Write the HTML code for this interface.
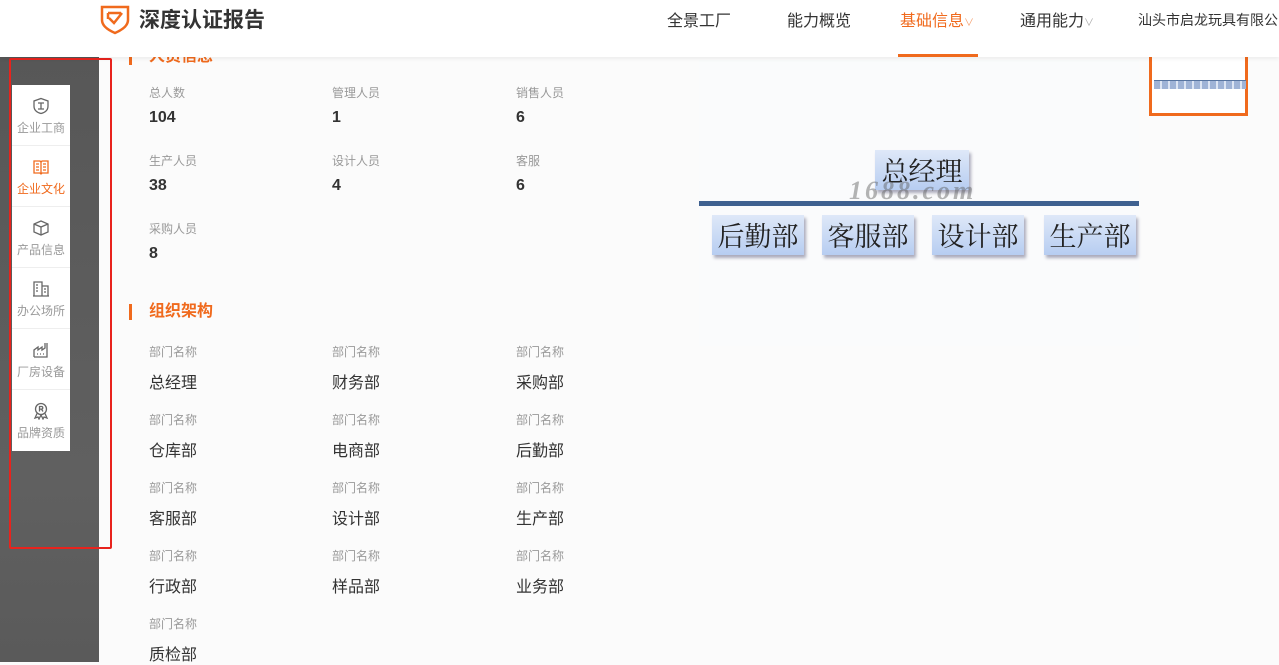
<!DOCTYPE html>
<html><head><meta charset="utf-8"><style>
*{margin:0;padding:0;box-sizing:border-box}
body{width:1279px;height:662px;overflow:hidden;background:#fbfbfb;font-family:"Liberation Sans","Noto Sans CJK SC",sans-serif;position:relative}
.side{position:absolute;left:0;top:57px;width:99px;height:605px;background:linear-gradient(180deg,#575757,#606060 70%,#5a5a5a)}
.redbox{position:absolute;left:9px;top:58px;width:103px;height:491px;border:2px solid #e8231d;border-radius:2px}
.menu{position:absolute;left:12px;top:85px;width:58px;background:#fff}
.mi{height:61px;border-bottom:1px solid #eee;text-align:center;font-size:12px;color:#999;padding-top:12px}
.mi svg{display:block;margin:0 auto 4px}
.mi.on{color:#f06a1d}
.hdr{position:absolute;left:0;top:0;width:1279px;height:57px;background:#fff;box-shadow:0 2px 4px rgba(0,0,0,.06);z-index:5}
.logo{position:absolute;left:99px;top:3px}
.brand{position:absolute;left:139px;top:4px;font-size:21px;font-weight:bold;color:#333}
.nav{position:absolute;top:7px;font-size:16px;color:#333}
.ul{position:absolute;left:898px;top:54px;width:80px;height:3px;background:#f06a1d}
.sec{position:absolute;left:129px;font-size:16px;font-weight:bold;color:#f06a1d;border-left:3px solid #f06a1d;padding-left:17px;line-height:16px}
.l{position:absolute;font-size:12px;color:#999}
.v{position:absolute;font-size:16px;color:#333}
.b{font-weight:bold}
.img{position:absolute;left:699px;top:60px;width:440px;height:286px;background:#fafbfc}
.box{position:absolute;background:linear-gradient(#dfe8f8,#b7cdf1);box-shadow:2px 3px 3px #aab;font-family:"Noto Serif CJK SC",serif;font-size:27px;color:#222;text-align:center;line-height:40px;white-space:nowrap}
</style></head><body>
<div class="side"></div>
<div class="menu">
<div class="mi"><svg width="18" height="18" viewBox="0 0 18 18" fill="none" stroke="#666" stroke-width="1.3"><path d="M9 1.5L16 4v5c0 4-3 6.5-7 7.5C5 15.5 2 13 2 9V4z"/><path d="M6 6h6M9 6v6M6 12h6"/></svg>企业工商</div>
<div class="mi on"><svg width="18" height="18" viewBox="0 0 18 18" fill="none" stroke="#f06a1d" stroke-width="1.3"><path d="M2 3h6l1 1 1-1h6v12h-6l-1 1-1-1H2z"/><path d="M9 4v11M4 6h3M4 9h3M4 12h3M11 6h3M11 9h3M11 12h3"/></svg>企业文化</div>
<div class="mi"><svg width="18" height="18" viewBox="0 0 18 18" fill="none" stroke="#666" stroke-width="1.3"><path d="M9 2l7 3v8l-7 3-7-3V5z"/><path d="M2 5l7 3 7-3M9 8v8"/></svg>产品信息</div>
<div class="mi"><svg width="18" height="18" viewBox="0 0 18 18" fill="none" stroke="#666" stroke-width="1.3"><path d="M2 16V2h8v14M10 6h6v10M1 16h16M4 5h2M4 8h2M4 11h2M12 9h2M12 12h2"/></svg>办公场所</div>
<div class="mi"><svg width="18" height="18" viewBox="0 0 18 18" fill="none" stroke="#666" stroke-width="1.3"><path d="M2 16V9l4-3v3l4-3v3l3-2V2M15 2v14H2M5 13h1M8 13h1M11 13h1"/></svg>厂房设备</div>
<div class="mi" style="border:0"><svg width="18" height="18" viewBox="0 0 18 18" fill="none" stroke="#666" stroke-width="1.3"><circle cx="9" cy="7" r="5.5"/><path d="M7.5 9.5V4.5h2a1.3 1.3 0 010 2.6h-2M9.5 7.1l1.5 2.4M5 11.5L3 16l3-1 1 2 2-4 2 4 1-2 3 1-2-4.5"/></svg>品牌资质</div>
</div>
<div class="redbox"></div>
<div class="hdr">
<svg class="logo" width="32" height="32" viewBox="0 0 32 32" fill="none" stroke="#f06a1d" stroke-width="2.5"><path d="M3 4h26v13c0 6-6 10-13 13C9 27 3 23 3 17z"/><path d="M9 10h13M9 10v6M10 15l5 5 8-10"/></svg>
<div class="brand">深度认证报告</div>
<div class="nav" style="left:667px">全景工厂</div>
<div class="nav" style="left:787px">能力概览</div>
<div class="nav" style="left:900px;color:#f06a1d">基础信息<span style="font-size:10px;color:#f5a070">∨</span></div>
<div class="nav" style="left:1020px">通用能力<span style="font-size:10px;color:#aaa">∨</span></div>
<div class="nav" style="left:1138px;font-size:14px;top:10px;white-space:nowrap">汕头市启龙玩具有限公司</div>
<div class="ul"></div>
</div>
<div class="sec" style="top:49px;z-index:1">人员信息</div>
<div class="l" style="left:149px;top:84px">总人数</div><div class="v b" style="left:149px;top:109px">104</div>
<div class="l" style="left:332px;top:84px">管理人员</div><div class="v b" style="left:332px;top:109px">1</div>
<div class="l" style="left:516px;top:84px">销售人员</div><div class="v b" style="left:516px;top:109px">6</div>
<div class="l" style="left:149px;top:152px">生产人员</div><div class="v b" style="left:149px;top:177px">38</div>
<div class="l" style="left:332px;top:152px">设计人员</div><div class="v b" style="left:332px;top:177px">4</div>
<div class="l" style="left:516px;top:152px">客服</div><div class="v b" style="left:516px;top:177px">6</div>
<div class="l" style="left:149px;top:220px">采购人员</div><div class="v b" style="left:149px;top:245px">8</div>
<div class="sec" style="top:304px">组织架构</div>
<div class="l" style="left:149px;top:343px">部门名称</div><div class="v" style="left:149px;top:369px">总经理</div>
<div class="l" style="left:332px;top:343px">部门名称</div><div class="v" style="left:332px;top:369px">财务部</div>
<div class="l" style="left:516px;top:343px">部门名称</div><div class="v" style="left:516px;top:369px">采购部</div>
<div class="l" style="left:149px;top:411px">部门名称</div><div class="v" style="left:149px;top:437px">仓库部</div>
<div class="l" style="left:332px;top:411px">部门名称</div><div class="v" style="left:332px;top:437px">电商部</div>
<div class="l" style="left:516px;top:411px">部门名称</div><div class="v" style="left:516px;top:437px">后勤部</div>
<div class="l" style="left:149px;top:479px">部门名称</div><div class="v" style="left:149px;top:505px">客服部</div>
<div class="l" style="left:332px;top:479px">部门名称</div><div class="v" style="left:332px;top:505px">设计部</div>
<div class="l" style="left:516px;top:479px">部门名称</div><div class="v" style="left:516px;top:505px">生产部</div>
<div class="l" style="left:149px;top:547px">部门名称</div><div class="v" style="left:149px;top:573px">行政部</div>
<div class="l" style="left:332px;top:547px">部门名称</div><div class="v" style="left:332px;top:573px">样品部</div>
<div class="l" style="left:516px;top:547px">部门名称</div><div class="v" style="left:516px;top:573px">业务部</div>
<div class="l" style="left:149px;top:615px">部门名称</div><div class="v" style="left:149px;top:641px">质检部</div>
<div class="img">
<div class="box" style="left:176px;top:90px;width:94px">总经理</div>
<div style="position:absolute;left:0;top:141px;width:440px;height:5px;background:#3f6190"></div>
<div style="position:absolute;left:150px;top:116px;font:italic bold 26px 'Liberation Serif',serif;color:rgba(90,90,90,.45);letter-spacing:3px">1688.com</div>
<div class="box" style="left:13px;top:155px;width:92px">后勤部</div>
<div class="box" style="left:123px;top:155px;width:92px">客服部</div>
<div class="box" style="left:233px;top:155px;width:92px">设计部</div>
<div class="box" style="left:345px;top:155px;width:92px">生产部</div>
</div>
<div style="position:absolute;left:1149px;top:55px;width:99px;height:61px;border:3px solid #f06a1d;border-top:0;background:#fff">
<div style="position:absolute;left:2px;top:25px;width:92px;height:9px;background:repeating-linear-gradient(90deg,#9fb3d6 0 6px,#dde5f3 6px 8px);border-top:1px solid #5774a0"></div>
</div>
</body></html>
